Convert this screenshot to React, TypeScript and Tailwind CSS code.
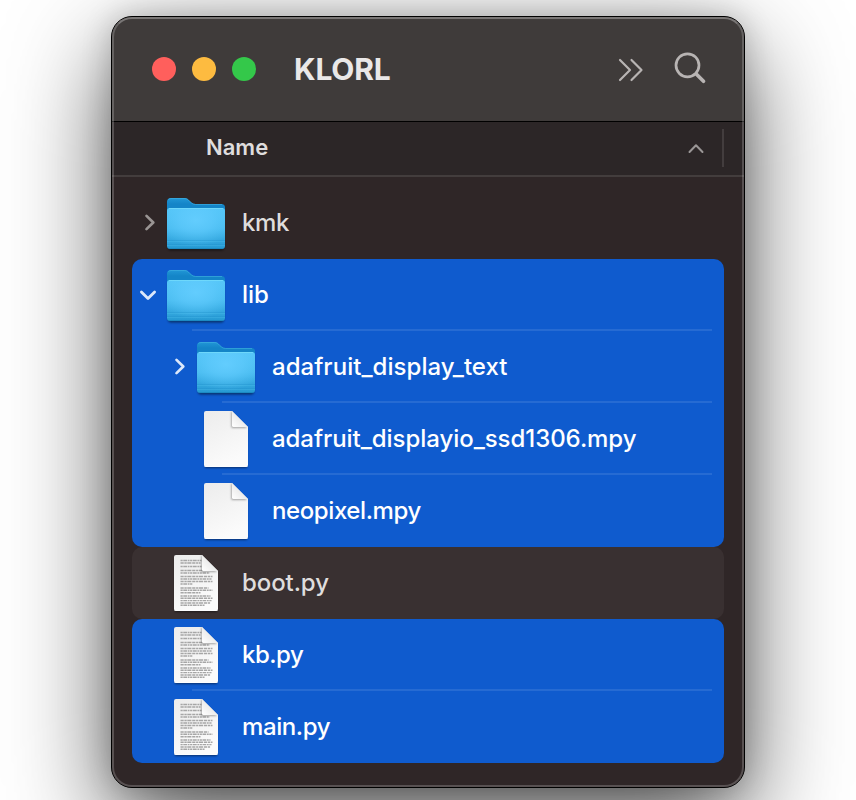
type Kind = 'folder' | 'file' | 'script';
type Row = { name: string; kind: Kind; nested?: boolean; open?: boolean; rule?: boolean; tracking: string };

const libRows: Row[] = [
  { name: 'lib', kind: 'folder', open: true, rule: true, tracking: 'tracking-[-0.1px]' },
  { name: 'adafruit_display_text', kind: 'folder', nested: true, rule: true, tracking: 'tracking-[0.04px]' },
  { name: 'adafruit_displayio_ssd1306.mpy', kind: 'file', nested: true, rule: true, tracking: 'tracking-[-0.05px]' },
  { name: 'neopixel.mpy', kind: 'file', nested: true, tracking: 'tracking-[-0.4px]' },
];
const pyRows: Row[] = [
  { name: 'kb.py', kind: 'script', rule: true, tracking: 'tracking-[-0.5px]' },
  { name: 'main.py', kind: 'script', tracking: 'tracking-[-0.4px]' },
];

function Gradients() {
  return (
    <svg width="0" height="0" className="absolute">
      <defs>
        <linearGradient id="back" x1="0" y1="0" x2="0" y2="1">
          <stop offset="0" stopColor="#2197d6" />
          <stop offset="0.2" stopColor="#1485c8" />
          <stop offset="1" stopColor="#1485c8" />
        </linearGradient>
        <linearGradient id="front" x1="0" y1="0" x2="0" y2="1">
          <stop offset="0" stopColor="#55c6f8" />
          <stop offset="0.5" stopColor="#48bbef" />
          <stop offset="1" stopColor="#2498d2" />
        </linearGradient>
        <radialGradient id="glow" cx="0.5" cy="0.3" r="0.65">
          <stop offset="0" stopColor="#65ceff" stopOpacity="0.9" />
          <stop offset="0.45" stopColor="#62ccfe" stopOpacity="0.6" />
          <stop offset="1" stopColor="#5ac8fa" stopOpacity="0" />
        </radialGradient>
        <linearGradient id="page" x1="0" y1="0" x2="0.4" y2="1">
          <stop offset="0" stopColor="#ececec" />
          <stop offset="1" stopColor="#fbfbfb" />
        </linearGradient>
        <linearGradient id="fold" x1="0" y1="1" x2="0.6" y2="0.4">
          <stop offset="0" stopColor="#ffffff" />
          <stop offset="1" stopColor="#e8e8e8" />
        </linearGradient>
        <filter id="soft" x="-50%" y="-50%" width="200%" height="200%">
          <feGaussianBlur stdDeviation="1.3" />
        </filter>
        <clipPath id="sheet">
          <path d="M2 0H28L44 16V54a2 2 0 0 1-2 2H2a2 2 0 0 1-2-2V2a2 2 0 0 1 2-2Z" />
        </clipPath>
      </defs>
    </svg>
  );
}

function Folder() {
  return (
    <svg width="58" height="56" viewBox="0 0 58 56" className="overflow-visible">
      <rect x="1" y="11" width="56" height="41.5" rx="3" fill="#000" opacity="0.5" filter="url(#soft)" />
      <path d="M0 4Q0 0 4 0H17.500C20 0 21 1.200 22.500 2.800L24.500 4.600Q26 6 28.500 6H54.500Q58 6 58 9.500V30H0Z" fill="url(#back)" />
      <path d="M1.500 1.500Q2.500 .5 4 .5H17.500C20 .5 21 1.600 22.500 3.200L24.500 5Q26 6.500 28.500 6.500H55" fill="none" stroke="#45b4e2" strokeWidth="0.8" opacity="0.7" />
      <rect y="10" width="58" height="41" rx="3" fill="url(#front)" />
      <rect y="10" width="58" height="41" rx="3" fill="url(#glow)" />
      <path d="M2 10.500H56" stroke="#74dcfb" strokeWidth="0.8" />
      <path d="M0 42.500H58M0 46.500H58" stroke="#1d8dc8" strokeWidth="0.8" opacity="0.4" />
      <path d="M0 43.400H58M0 47.400H58" stroke="#62cdf5" strokeWidth="0.6" opacity="0.35" />
      <path d="M2 50.600H56" stroke="#1984bd" strokeWidth="0.8" />
    </svg>
  );
}

const textLines = [
  [5.5, 21], [8, 20], [11.500, 21],
  [15.500, 22], [18, 29],
  [21.500, 32], [24, 31], [26.500, 32], [29, 12],
  [33, 28], [35.300, 32], [37.700, 20],
  [41, 30], [43.300, 32], [45.600, 31], [48, 30], [50.300, 24],
];

function Page({ script }: { script?: boolean }) {
  return (
    <svg width="44" height="56" viewBox="0 0 44 56" className="overflow-visible">
      <path d="M1 3H28L43 18V56H1Z" fill="#000" opacity="0.55" filter="url(#soft)" transform="translate(0 .8)" />
      <path d="M2 0H28L44 16V54a2 2 0 0 1-2 2H2a2 2 0 0 1-2-2V2a2 2 0 0 1 2-2Z" fill="url(#page)" />
      {script &&
        textLines.map(([y, w], i) => (
          <path
            key={y}
            d={`M6.500 ${y}h${w}`}
            stroke="#a6a6a6"
            strokeWidth="1.4"
            strokeDasharray={i % 2 ? '3.200 .7 2.300 .6 4.100 .8' : '2.200 .6 3.800 .7 1.700 .6'}
          />
        ))}
      <g clipPath="url(#sheet)">
        <path d="M27.500 1V16.700H43L28 0Z" fill="#000" opacity="0.4" filter="url(#soft)" />
      </g>
      <path d="M28 0V14.500Q28 16 29.500 16H44Z" fill="url(#fold)" />
      <path d="M.5 55.500H43.500" stroke="#fff" strokeWidth="0.8" opacity="0.8" />
    </svg>
  );
}

function Disclosure({ open, selected }: { open?: boolean; selected: boolean }) {
  const color = selected ? '#dce8fa' : '#9a9594';
  return open ? (
    <svg width="20" height="20" viewBox="0 0 20 20" fill="none" stroke={color} strokeWidth="2.800" strokeLinecap="round" strokeLinejoin="round" className="-ml-0.5 mr-0.5">
      <path d="M3.400 7 10 13.600 16.600 7" />
    </svg>
  ) : (
    <svg width="20" height="20" viewBox="0 0 20 20" fill="none" stroke={color} strokeWidth="2.700" strokeLinecap="round" strokeLinejoin="round">
      <path d="M6.500 2.900 13.300 9.500 6.500 16.100" />
    </svg>
  );
}

function Item({ row, selected }: { row: Row; selected: boolean }) {
  return (
    <div className={`flex h-[72px] flex-col ${row.nested ? 'pl-[38px]' : 'pl-2'}`}>
      <div className="flex h-[70px] items-center">
        <div className="flex w-[27px] shrink-0 pt-[1px]">
          {row.kind === 'folder' && <Disclosure open={row.open} selected={selected} />}
        </div>
        <div className={`flex w-[58px] shrink-0 justify-center ${row.kind === 'folder' ? 'pt-2' : 'pt-[2px]'}`}>
          {row.kind === 'folder' ? <Folder /> : <Page script={row.kind === 'script'} />}
        </div>
        <span className={`ml-[17px] whitespace-nowrap pt-0.5 text-[24px] leading-8 ${row.tracking} ${selected ? 'font-medium text-white' : 'font-[450] text-[#dfdddd]'}`}>
          {row.name}
        </span>
      </div>
      {row.rule && <div className="ml-[52px] mr-3 h-0.5 bg-[#266bd3]" />}
    </div>
  );
}

function Selection({ rows }: { rows: Row[] }) {
  return (
    <div className="rounded-[10px] bg-[#0f5bce]">
      {rows.map((row) => (
        <Item key={row.name} row={row} selected />
      ))}
    </div>
  );
}

export default function App() {
  return (
    <div className="h-[800px] w-[856px] overflow-hidden bg-white pl-[111px] pt-4 font-['Inter','Liberation_Sans',sans-serif]">
      <Gradients />
      <div className="relative flex h-[772px] w-[634px] flex-col overflow-visible rounded-[21px] border border-black bg-[#2f2627] shadow-[0_36px_100px_rgba(0,0,0,0.68),0_0_30px_rgba(0,0,0,0.2)]">
        <header className="flex h-[105px] shrink-0 items-center rounded-t-[20px] border-b border-black bg-[#3f3b3a] pl-10">
          <div className="flex gap-4">
            <span className="size-6 rounded-full bg-[#ff5f5c]" />
            <span className="size-6 rounded-full bg-[#fdbb40]" />
            <span className="size-6 rounded-full bg-[#34c84a]" />
          </div>
          <h1 className="ml-[38px] text-[30px] font-bold leading-9 tracking-[-0.2px] text-[#eae8e8]">KLORL</h1>
          <svg width="28" height="28" viewBox="0 0 28 28" fill="none" stroke="#b8b4b3" strokeWidth="2.200" strokeLinecap="round" strokeLinejoin="round" className="ml-auto mt-0.5">
            <path d="M3 4 13 14 3 24M14.500 4 24.500 14 14.500 24" />
          </svg>
          <svg width="36" height="36" viewBox="0 0 36 36" fill="none" stroke="#b8b4b3" strokeLinecap="round" className="-mt-0.5 ml-[27px] mr-9">
            <circle cx="15.500" cy="15.300" r="11.500" strokeWidth="2.700" />
            <path d="M24.500 24.300 31.500 31.300" strokeWidth="3.700" />
          </svg>
        </header>
        <div className="flex h-[55px] shrink-0 items-center border-b-2 border-[#433d3d] bg-[#2c2627] pb-[2px] pl-[94px] pr-5">
          <span className="-mt-0.5 text-[22px] font-semibold leading-7 tracking-[0px] text-[#dfdddd]">Name</span>
          <svg width="20" height="12" viewBox="0 0 20 12" fill="none" stroke="#9a9696" strokeWidth="2" strokeLinecap="round" strokeLinejoin="round" className="ml-auto mt-[3px]">
            <path d="M3.500 9 10 2.200 16.500 9" />
          </svg>
          <div className="ml-4 h-[38px] w-0.5 bg-[#433d3e]" />
        </div>
        <main className="px-5 pt-[10px]">
          <Item row={{ name: 'kmk', kind: 'folder', tracking: 'tracking-[-0.4px]' }} selected={false} />
          <Selection rows={libRows} />
          <div className="rounded-[10px] bg-[#393031]">
            <Item row={{ name: 'boot.py', kind: 'script', tracking: 'tracking-[-0.08px]' }} selected={false} />
          </div>
          <Selection rows={pyRows} />
        </main>
        <div className="pointer-events-none absolute inset-0 rounded-[20px] border-2 border-t-white/30 border-x-white/20 border-b-white/20" />
      </div>
    </div>
  );
}
